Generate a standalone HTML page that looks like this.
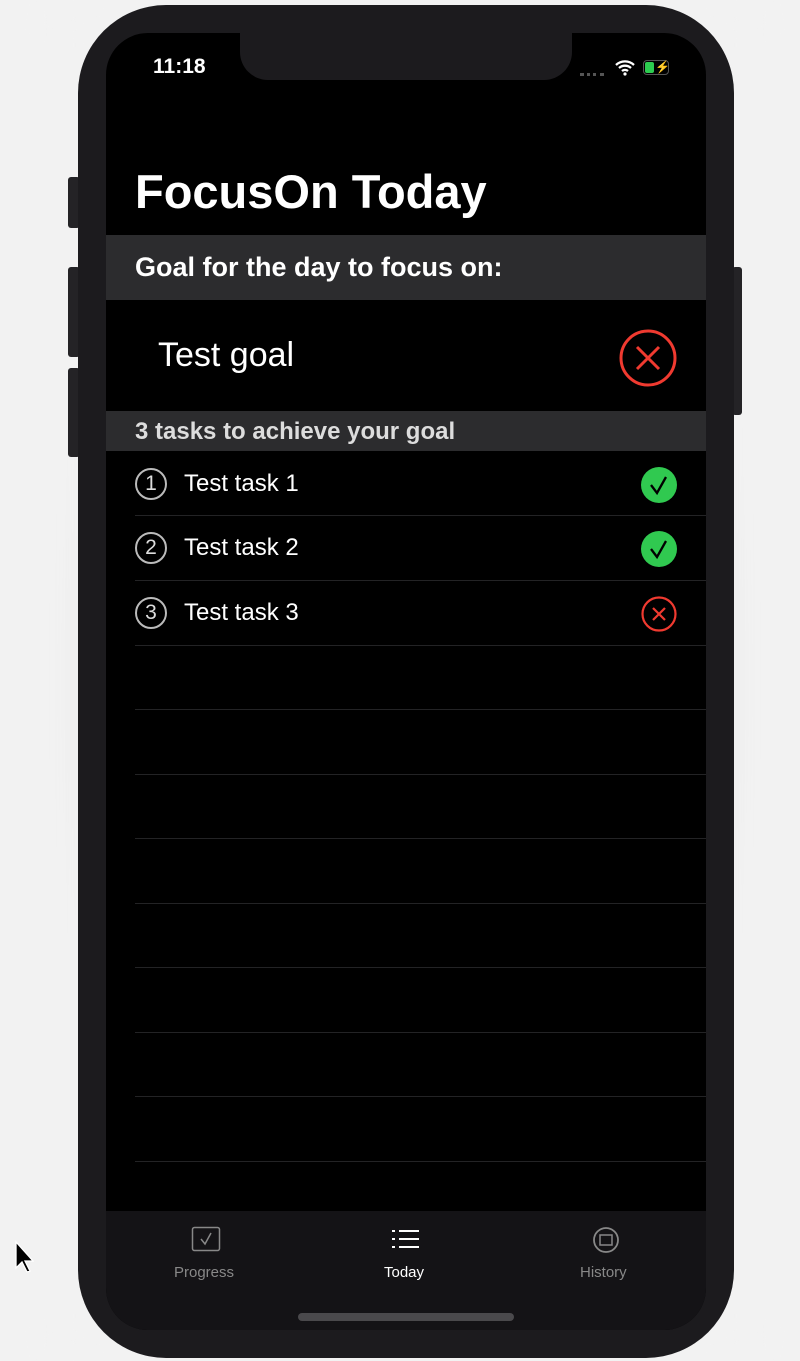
<!DOCTYPE html><html><head><style>
body{margin:0;width:800px;height:1361px;background:#f2f2f2;position:relative;overflow:hidden;font-family:"Liberation Sans",sans-serif}
.a{position:absolute}
.btn{position:absolute;background:#242326;border-radius:3px}
.sep{position:absolute;left:135px;width:571px;height:1px;background:#232325}
.t{color:#fff;font-size:24px}
</style></head><body>
<div class="a" style="left:60px;top:0;width:690px;height:1361px;background:radial-gradient(ellipse at center,#999 0%,#f2f2f2 70%);filter:blur(20px);opacity:.6"></div>
<div class="btn" style="left:68px;top:177px;width:12px;height:51px"></div>
<div class="btn" style="left:68px;top:267px;width:12px;height:90px"></div>
<div class="btn" style="left:68px;top:368px;width:12px;height:89px"></div>
<div class="btn" style="left:732px;top:267px;width:10px;height:148px"></div>
<div class="a" style="left:78px;top:5px;width:656px;height:1353px;background:#1c1b1e;border-radius:88px"></div>
<div class="a" style="left:106px;top:33px;width:600px;height:1297px;background:#000;border-radius:42px;overflow:hidden">
 <div class="a" style="left:134px;top:-10px;width:332px;height:57px;background:#1c1b1e;border-radius:0 0 28px 28px"></div>
 <div class="a" style="left:47px;top:22px;color:#fff;font-size:21px;font-weight:bold">11:18</div>
 <div class="a" style="left:474px;top:40px;width:24px;height:3px;border-top:3px dotted #555"></div>
 <svg class="a" style="left:508px;top:25px" width="22" height="18" viewBox="0 0 22 18"><path d="M2 7a13 13 0 0 1 18 0M5 10a9 9 0 0 1 12 0M8 13a4.5 4.5 0 0 1 6 0" stroke="#fff" stroke-width="2.3" fill="none"/><circle cx="11" cy="16" r="1.6" fill="#fff"/></svg>
 <div class="a" style="left:537px;top:27px;width:24px;height:13px;border:1.5px solid #555;border-radius:4px"><div style="width:9px;height:11px;margin:1px;background:#2dcc50;border-radius:2px"></div><div class="a" style="left:11px;top:0;color:#fff;font-size:12px;line-height:13px">⚡</div></div>
 <div class="a" style="left:29px;top:131px;color:#fff;font-size:47px;font-weight:bold;letter-spacing:0px">FocusOn Today</div>
 <div class="a" style="left:0;top:202px;width:600px;height:65px;background:#2c2c2e"></div>
 <div class="a" style="left:29px;top:219px;color:#fff;font-size:27px;font-weight:bold">Goal for the day to focus on:</div>
 <div class="a" style="left:52px;top:303px;color:#fff;font-size:34px">Test goal</div>
 <svg class="a" style="left:512px;top:295px" width="60" height="60"><circle cx="30" cy="30" r="27" stroke="#f03a30" stroke-width="3" fill="none"/><path d="M19 19L41 41M41 19L19 41" stroke="#f03a30" stroke-width="3"/></svg>
 <div class="a" style="left:0;top:378px;width:600px;height:40px;background:#2c2c2e"></div>
 <div class="a" style="left:29px;top:385px;color:#ddd;font-size:24px;font-weight:bold">3 tasks to achieve your goal</div>
</div>
<div class="a" style="left:135px;top:468px;width:32px;height:32px;border:2px solid #bbb;border-radius:50%;box-sizing:border-box;color:#ddd;font-size:21px;text-align:center;line-height:28px">1</div>
<div class="a t" style="left:184px;top:470px">Test task 1</div>
<div class="a" style="left:135px;top:532px;width:32px;height:32px;border:2px solid #bbb;border-radius:50%;box-sizing:border-box;color:#ddd;font-size:21px;text-align:center;line-height:28px">2</div>
<div class="a t" style="left:184px;top:534px">Test task 2</div>
<div class="a" style="left:135px;top:597px;width:32px;height:32px;border:2px solid #bbb;border-radius:50%;box-sizing:border-box;color:#ddd;font-size:21px;text-align:center;line-height:28px">3</div>
<div class="a t" style="left:184px;top:599px">Test task 3</div>
<svg class="a" style="left:640px;top:466px" width="38" height="38"><circle cx="19" cy="19" r="18" fill="#30c950"/><path d="M11 19l6 8 9-16" stroke="#000" stroke-width="2.3" fill="none"/></svg>
<svg class="a" style="left:640px;top:530px" width="38" height="38"><circle cx="19" cy="19" r="18" fill="#30c950"/><path d="M11 19l6 8 9-16" stroke="#000" stroke-width="2.3" fill="none"/></svg>
<svg class="a" style="left:640px;top:595px" width="38" height="38"><circle cx="19" cy="19" r="16.5" stroke="#f03a30" stroke-width="2.2" fill="none"/><path d="M13 13L25 25M25 13L13 25" stroke="#f03a30" stroke-width="2.2"/></svg>
<div class="sep" style="top:515px"></div><div class="sep" style="top:580px"></div><div class="sep" style="top:645px"></div><div class="sep" style="top:709px"></div><div class="sep" style="top:774px"></div><div class="sep" style="top:838px"></div><div class="sep" style="top:903px"></div><div class="sep" style="top:967px"></div><div class="sep" style="top:1032px"></div><div class="sep" style="top:1096px"></div><div class="sep" style="top:1161px"></div>
<div class="a" style="left:106px;top:1211px;width:600px;height:119px;background:#141316;border-radius:0 0 42px 42px"></div>
<svg class="a" style="left:191px;top:1226px" width="30" height="26"><rect x="1.5" y="1.5" width="27" height="23" rx="2" stroke="#888" stroke-width="1.5" fill="none"/><path d="M10 13l4 5 6-11" stroke="#888" stroke-width="1.5" fill="none"/></svg>
<div class="a" style="left:174px;top:1264px;color:#888;font-size:15px">Progress</div>
<svg class="a" style="left:392px;top:1229px" width="28" height="22"><g fill="#fff"><rect x="0" y="1" width="3" height="2"/><rect x="7" y="1" width="20" height="2"/><rect x="0" y="9" width="3" height="2"/><rect x="7" y="9" width="20" height="2"/><rect x="0" y="17" width="3" height="2"/><rect x="7" y="17" width="20" height="2"/></g></svg>
<div class="a" style="left:384px;top:1264px;color:#fff;font-size:15px">Today</div>
<svg class="a" style="left:592px;top:1226px" width="28" height="28"><circle cx="14" cy="14" r="12" stroke="#888" stroke-width="1.8" fill="none"/><rect x="8" y="9" width="12" height="10" stroke="#888" stroke-width="1.5" fill="none"/></svg>
<div class="a" style="left:580px;top:1264px;color:#888;font-size:15px">History</div>
<div class="a" style="left:298px;top:1313px;width:216px;height:8px;background:#4a494c;border-radius:4px"></div>
<svg class="a" style="left:14px;top:1240px" width="20" height="34"><path d="M2 2v26l6-6 5 10 3-1-5-10h8z" fill="#000" stroke="#fff" stroke-width="1.3"/></svg>
</body></html>
